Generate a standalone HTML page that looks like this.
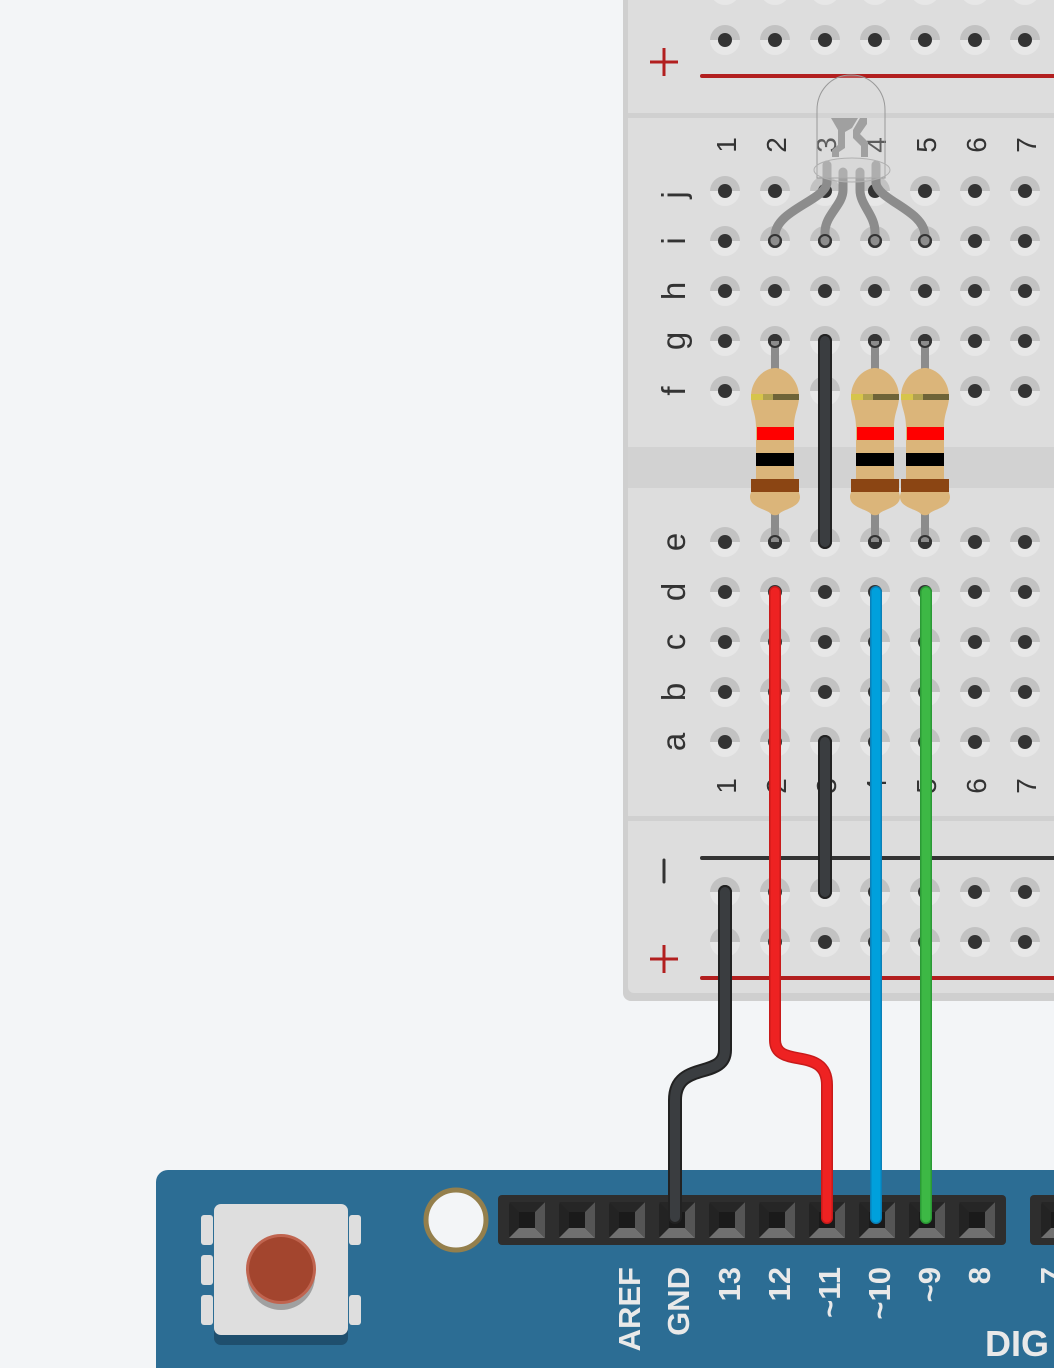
<!DOCTYPE html>
<html><head><meta charset="utf-8"><style>
html,body{margin:0;padding:0;background:#f3f5f7;}
svg{display:block}
</style></head><body>
<svg width="1054" height="1368" viewBox="0 0 1054 1368" xmlns="http://www.w3.org/2000/svg">
<defs>
<g id="h"><path d="M-15 0 A15 15 0 0 1 15 0Z" fill="#c2c2c2"/><path d="M-15 0 A15 15 0 0 0 15 0Z" fill="#e7e7e7"/><circle r="7" fill="#333"/></g>
<g id="p"><rect x="-18" y="-18" width="36" height="36" rx="3" fill="#232323"/><path d="M-18 18 L-8 8 L8 8 L18 18Z" fill="#707070"/><path d="M18 -18 L8 -8 L8 8 L18 18Z" fill="#555"/><path d="M-18 -18 L-8 -8 L8 -8 L18 -18Z" fill="#262626"/><rect x="-8" y="-8" width="16" height="16" fill="#1a1a1a"/></g>
<g id="r"><path d="M-4 0 L4 0 L4 30 L-4 30Z" fill="#8c8c8c"/><path d="M-4 170 L4 170 L4 201 L-4 201Z" fill="#8c8c8c"/>
<path d="M0 27 C10 27 24 38 24 56 C24 66 19 72 19 86 L19 136 C19 146 25 150 25 156 C25 166 10 168 5 172 C3 175 -3 175 -5 172 C-10 168 -25 166 -25 156 C-25 150 -19 146 -19 136 L-19 86 C-19 72 -24 66 -24 56 C-24 38 -10 27 0 27Z" fill="#dbb57a"/>
<rect x="-24" y="53" width="12" height="6" fill="#d6c44a"/><rect x="-12" y="53" width="10" height="6" fill="#b0a050"/><rect x="-2" y="53" width="26" height="6" fill="#6e6338"/>
<rect x="-18" y="86" width="37" height="13" fill="#ff0000"/><rect x="-19" y="112" width="38" height="13" fill="#000"/><rect x="-24" y="138" width="48" height="13" fill="#8b4513"/>
<circle cx="0" cy="0" r="6" fill="none" stroke="#333" stroke-width="2"/><circle cx="0" cy="201" r="6" fill="none" stroke="#333" stroke-width="2"/></g>
</defs>
<rect width="1054" height="1368" fill="#f3f5f7"/>
<!-- breadboard -->
<rect x="623" y="-20" width="460" height="1021" rx="8" fill="#cfcfcf"/>
<rect x="628" y="-20" width="460" height="1013" rx="6" fill="#dddddd"/>
<rect x="628" y="113" width="430" height="5" fill="#d0d0d0"/>
<rect x="628" y="816" width="430" height="5" fill="#d0d0d0"/>
<rect x="628" y="447" width="430" height="41" fill="#d2d2d2"/>
<line x1="702" y1="76" x2="1060" y2="76" stroke="#b21f1f" stroke-width="4" stroke-linecap="round"/>
<line x1="702" y1="858" x2="1060" y2="858" stroke="#333" stroke-width="4" stroke-linecap="round"/>
<line x1="702" y1="978" x2="1060" y2="978" stroke="#b21f1f" stroke-width="4" stroke-linecap="round"/>
<path d="M650 62 H678 M664 48 V76" stroke="#b21f1f" stroke-width="3"/>
<path d="M650 959 H678 M664 945 V973" stroke="#b21f1f" stroke-width="3"/>
<path d="M664 860 V882" stroke="#333" stroke-width="3" stroke-linecap="round"/>
<g font-family="Liberation Sans, DejaVu Sans, sans-serif" font-size="33" fill="#333">
<text transform="translate(685,195) rotate(-90)" text-anchor="middle">j</text>
<text transform="translate(685,241) rotate(-90)" text-anchor="middle">i</text>
<text transform="translate(685,291) rotate(-90)" text-anchor="middle">h</text>
<text transform="translate(685,341) rotate(-90)" text-anchor="middle">g</text>
<text transform="translate(685,391) rotate(-90)" text-anchor="middle">f</text>
<text transform="translate(685,542) rotate(-90)" text-anchor="middle">e</text>
<text transform="translate(685,592) rotate(-90)" text-anchor="middle">d</text>
<text transform="translate(685,642) rotate(-90)" text-anchor="middle">c</text>
<text transform="translate(685,692) rotate(-90)" text-anchor="middle">b</text>
<text transform="translate(685,742) rotate(-90)" text-anchor="middle">a</text>
</g>
<g font-family="Liberation Sans, DejaVu Sans, sans-serif" font-size="28" fill="#333">
<text transform="translate(736,145) rotate(-90)" text-anchor="middle">1</text>
<text transform="translate(786,145) rotate(-90)" text-anchor="middle">2</text>
<text transform="translate(836,145) rotate(-90)" text-anchor="middle">3</text>
<text transform="translate(886,145) rotate(-90)" text-anchor="middle">4</text>
<text transform="translate(936,145) rotate(-90)" text-anchor="middle">5</text>
<text transform="translate(986,145) rotate(-90)" text-anchor="middle">6</text>
<text transform="translate(1036,145) rotate(-90)" text-anchor="middle">7</text>
<text transform="translate(736,786) rotate(-90)" text-anchor="middle">1</text>
<text transform="translate(786,786) rotate(-90)" text-anchor="middle">2</text>
<text transform="translate(836,786) rotate(-90)" text-anchor="middle">3</text>
<text transform="translate(886,786) rotate(-90)" text-anchor="middle">4</text>
<text transform="translate(936,786) rotate(-90)" text-anchor="middle">5</text>
<text transform="translate(986,786) rotate(-90)" text-anchor="middle">6</text>
<text transform="translate(1036,786) rotate(-90)" text-anchor="middle">7</text>
</g>
<g>
<use href="#h" x="725" y="-10"/><use href="#h" x="775" y="-10"/><use href="#h" x="825" y="-10"/><use href="#h" x="875" y="-10"/><use href="#h" x="925" y="-10"/><use href="#h" x="975" y="-10"/><use href="#h" x="1025" y="-10"/>
<use href="#h" x="725" y="40"/><use href="#h" x="775" y="40"/><use href="#h" x="825" y="40"/><use href="#h" x="875" y="40"/><use href="#h" x="925" y="40"/><use href="#h" x="975" y="40"/><use href="#h" x="1025" y="40"/>
<use href="#h" x="725" y="191"/><use href="#h" x="775" y="191"/><use href="#h" x="825" y="191"/><use href="#h" x="875" y="191"/><use href="#h" x="925" y="191"/><use href="#h" x="975" y="191"/><use href="#h" x="1025" y="191"/>
<use href="#h" x="725" y="241"/><use href="#h" x="775" y="241"/><use href="#h" x="825" y="241"/><use href="#h" x="875" y="241"/><use href="#h" x="925" y="241"/><use href="#h" x="975" y="241"/><use href="#h" x="1025" y="241"/>
<use href="#h" x="725" y="291"/><use href="#h" x="775" y="291"/><use href="#h" x="825" y="291"/><use href="#h" x="875" y="291"/><use href="#h" x="925" y="291"/><use href="#h" x="975" y="291"/><use href="#h" x="1025" y="291"/>
<use href="#h" x="725" y="341"/><use href="#h" x="775" y="341"/><use href="#h" x="825" y="341"/><use href="#h" x="875" y="341"/><use href="#h" x="925" y="341"/><use href="#h" x="975" y="341"/><use href="#h" x="1025" y="341"/>
<use href="#h" x="725" y="391"/><use href="#h" x="775" y="391"/><use href="#h" x="825" y="391"/><use href="#h" x="875" y="391"/><use href="#h" x="925" y="391"/><use href="#h" x="975" y="391"/><use href="#h" x="1025" y="391"/>
<use href="#h" x="725" y="542"/><use href="#h" x="775" y="542"/><use href="#h" x="825" y="542"/><use href="#h" x="875" y="542"/><use href="#h" x="925" y="542"/><use href="#h" x="975" y="542"/><use href="#h" x="1025" y="542"/>
<use href="#h" x="725" y="592"/><use href="#h" x="775" y="592"/><use href="#h" x="825" y="592"/><use href="#h" x="875" y="592"/><use href="#h" x="925" y="592"/><use href="#h" x="975" y="592"/><use href="#h" x="1025" y="592"/>
<use href="#h" x="725" y="642"/><use href="#h" x="775" y="642"/><use href="#h" x="825" y="642"/><use href="#h" x="875" y="642"/><use href="#h" x="925" y="642"/><use href="#h" x="975" y="642"/><use href="#h" x="1025" y="642"/>
<use href="#h" x="725" y="692"/><use href="#h" x="775" y="692"/><use href="#h" x="825" y="692"/><use href="#h" x="875" y="692"/><use href="#h" x="925" y="692"/><use href="#h" x="975" y="692"/><use href="#h" x="1025" y="692"/>
<use href="#h" x="725" y="742"/><use href="#h" x="775" y="742"/><use href="#h" x="825" y="742"/><use href="#h" x="875" y="742"/><use href="#h" x="925" y="742"/><use href="#h" x="975" y="742"/><use href="#h" x="1025" y="742"/>
<use href="#h" x="725" y="892"/><use href="#h" x="775" y="892"/><use href="#h" x="825" y="892"/><use href="#h" x="875" y="892"/><use href="#h" x="925" y="892"/><use href="#h" x="975" y="892"/><use href="#h" x="1025" y="892"/>
<use href="#h" x="725" y="942"/><use href="#h" x="775" y="942"/><use href="#h" x="825" y="942"/><use href="#h" x="875" y="942"/><use href="#h" x="925" y="942"/><use href="#h" x="975" y="942"/><use href="#h" x="1025" y="942"/>
</g>
<!-- LED -->
<g fill="none" stroke="#8c8c8c" stroke-width="9" stroke-linecap="round">
<path d="M827 165 V182 C827 200 775 210 775 236 V241"/>
<path d="M843 172 V190 C843 205 825 215 825 232 V241"/>
<path d="M860 172 V190 C860 205 875 215 875 232 V241"/>
<path d="M876 165 V182 C876 200 925 210 925 236 V241"/>
</g>
<g stroke="#333" stroke-width="2" fill="none"><circle cx="775" cy="241" r="6"/><circle cx="825" cy="241" r="6"/><circle cx="875" cy="241" r="6"/><circle cx="925" cy="241" r="6"/></g>
<path d="M831 118 H858 L852 128 L845 132 L845 148 L839 152 V157 H832 V150 L838 145 V130 Z" fill="#8c8c8c"/>
<path d="M860 118 H867 V124 L860 134 L868 142 V157 H861 V146 L853 138 V130Z" fill="#8c8c8c"/>
<path d="M817 178 V110 C817 92 830 75 851 75 C872 75 885 92 885 110 V178 Z" fill="rgba(220,220,220,0.25)" stroke="#999" stroke-width="1"/>
<ellipse cx="852" cy="170" rx="38" ry="12" fill="rgba(210,210,210,0.3)" stroke="#b0b0b0" stroke-width="1"/>
<!-- resistors -->
<use href="#r" x="775" y="341"/>
<use href="#r" x="875" y="341"/>
<use href="#r" x="925" y="341"/>
<!-- jumpers -->
<g stroke-linecap="round" fill="none">
<line x1="825" y1="341" x2="825" y2="542" stroke="#222" stroke-width="14"/><line x1="825" y1="341" x2="825" y2="542" stroke="#3a3d40" stroke-width="10"/>
<line x1="825" y1="742" x2="825" y2="892" stroke="#222" stroke-width="14"/><line x1="825" y1="742" x2="825" y2="892" stroke="#3a3d40" stroke-width="10"/>
</g>
<!-- arduino -->
<rect x="156" y="1170" width="920" height="220" rx="12" fill="#2c6d94"/>
<rect x="498" y="1195" width="508" height="50" rx="4" fill="#2e2e2e"/>
<rect x="1030" y="1195" width="60" height="50" rx="4" fill="#2e2e2e"/>
<use href="#p" x="527" y="1220"/><use href="#p" x="577" y="1220"/><use href="#p" x="627" y="1220"/><use href="#p" x="677" y="1220"/><use href="#p" x="727" y="1220"/><use href="#p" x="777" y="1220"/><use href="#p" x="827" y="1220"/><use href="#p" x="877" y="1220"/><use href="#p" x="927" y="1220"/><use href="#p" x="977" y="1220"/><use href="#p" x="1059" y="1220"/>
<circle cx="456" cy="1220" r="30" fill="#f3f5f7" stroke="#947f4c" stroke-width="5"/>
<rect x="201" y="1215" width="12" height="30" rx="3" fill="#dedede"/><rect x="201" y="1255" width="12" height="30" rx="3" fill="#dedede"/><rect x="201" y="1295" width="12" height="30" rx="3" fill="#dedede"/>
<rect x="349" y="1215" width="12" height="30" rx="3" fill="#dedede"/><rect x="349" y="1295" width="12" height="30" rx="3" fill="#dedede"/>
<rect x="214" y="1214" width="134" height="131" rx="7" fill="#1f4f6e"/>
<rect x="214" y="1204" width="134" height="131" rx="7" fill="#dedede"/>
<circle cx="281" cy="1276" r="34" fill="#a0a0a0"/>
<circle cx="281" cy="1269" r="35" fill="#c0644f"/>
<circle cx="281" cy="1269" r="32" fill="#a3452e"/>
<g font-family="Liberation Sans, DejaVu Sans, sans-serif" font-weight="bold" font-size="31" fill="#e9e9e9">
<text transform="translate(640,1267) rotate(-90)" text-anchor="end">AREF</text>
<text transform="translate(689,1267) rotate(-90)" text-anchor="end">GND</text>
<text transform="translate(740,1267) rotate(-90)" text-anchor="end">13</text>
<text transform="translate(790,1267) rotate(-90)" text-anchor="end">12</text>
<text transform="translate(840,1267) rotate(-90)" text-anchor="end">~11</text>
<text transform="translate(890,1267) rotate(-90)" text-anchor="end">~10</text>
<text transform="translate(940,1267) rotate(-90)" text-anchor="end">~9</text>
<text transform="translate(990,1267) rotate(-90)" text-anchor="end">8</text>
<text transform="translate(1062,1267) rotate(-90)" text-anchor="end">7</text>
<text x="985" y="1356" font-size="36">DIG</text>
</g>
<!-- long wires -->
<g stroke-linecap="round" fill="none">
<path d="M725 892 V1050 C725 1080 675 1060 675 1100 V1217" stroke="#222" stroke-width="14"/>
<path d="M725 892 V1050 C725 1080 675 1060 675 1100 V1217" stroke="#3a3d40" stroke-width="10"/>
<path d="M775 592 V1040 C775 1070 827 1045 827 1085 V1218" stroke="#c81a1a" stroke-width="12"/>
<path d="M775 592 V1040 C775 1070 827 1045 827 1085 V1218" stroke="#ee2222" stroke-width="9"/>
<line x1="876" y1="592" x2="876" y2="1218" stroke="#0a80b8" stroke-width="12"/>
<line x1="876" y1="592" x2="876" y2="1218" stroke="#00a0dc" stroke-width="9"/>
<line x1="926" y1="592" x2="926" y2="1218" stroke="#2a9a35" stroke-width="12"/>
<line x1="926" y1="592" x2="926" y2="1218" stroke="#3db845" stroke-width="9"/>
</g>
</svg>
</body></html>
